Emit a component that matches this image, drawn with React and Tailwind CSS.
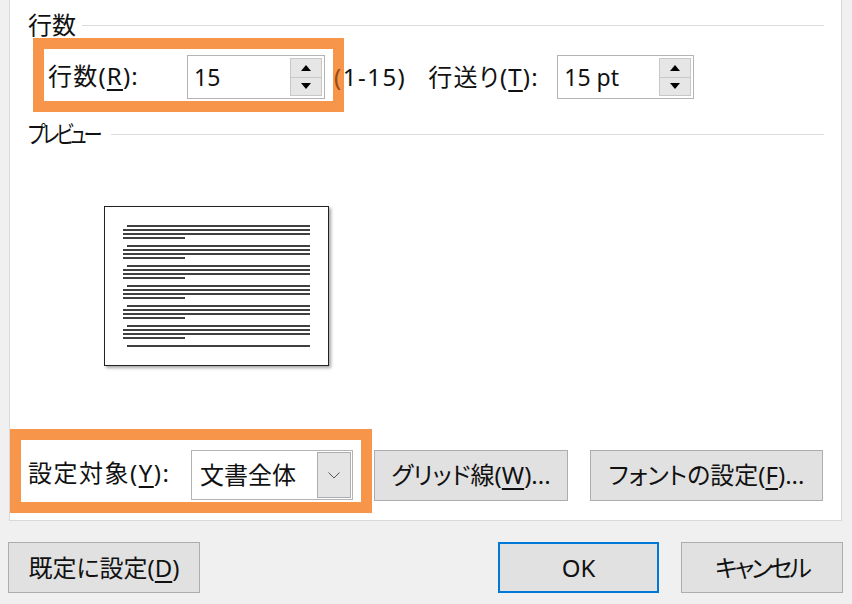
import { useState } from "react";

const font = { fontFamily: '"Noto Sans", "Noto Sans CJK JP", sans-serif' };

function Spin({ value, w }) {
  return (
    <div className={`flex items-center justify-between h-[44px] ${w} bg-white border border-[#b4b4b4] pl-[6px] pr-[2px]`}>
      <span className="text-[23px] leading-none">{value}</span>
      <div className="flex flex-col w-[32px] h-[38px] border border-[#c8c8c8]">
        <div className="flex-1 flex items-center justify-center bg-[#e6e6e6] border-b border-[#c8c8c8]">
          <svg width="10" height="6" viewBox="0 0 10 6"><path d="M0 6 L5 0 L10 6 Z" fill="#000" /></svg>
        </div>
        <div className="flex-1 flex items-center justify-center bg-[#e6e6e6]">
          <svg width="10" height="6" viewBox="0 0 10 6"><path d="M0 0 L5 6 L10 0 Z" fill="#000" /></svg>
        </div>
      </div>
    </div>
  );
}

function Heading({ text, gap, track }) {
  return (
    <div className="flex items-center h-[24px] pl-[18px] pr-[17px]">
      <span className={`inline-block text-[24px] leading-none origin-left ${track}`}>{text}</span>
      <div className={`flex-1 h-px bg-[#dcdcdc] ${gap}`} />
    </div>
  );
}

function Preview() {
  const ys = [];
  for (let g = 0; g < 6; g++) {
    for (let k = 0; k < 4; k++) ys.push({ y: 19 + g * 20 + k * 4, k });
  }
  return (
    <div className="ml-[94px] w-[225px] h-[160px] bg-white border border-[#222] shadow-[2px_2px_3px_rgba(0,0,0,0.35)]">
      <svg width="223" height="158" viewBox="0 0 223 158">
        {ys.map((l, i) => (
          <line
            key={i}
            x1={l.k === 0 ? 22 : 18}
            x2={l.k === 3 ? 80 : 205}
            y1={l.y}
            y2={l.y}
            stroke="#000"
            strokeWidth="1.3"
          />
        ))}
        <line x1="22" x2="205" y1="139" y2="139" stroke="#000" strokeWidth="1.3" />
      </svg>
    </div>
  );
}

function Btn({ children, w, ok, track }) {
  return (
    <button
      className={`${w} h-[51px] flex items-center justify-center bg-[#e1e1e1] text-[24px] leading-none ${track || ""} ${
        ok ? "border-2 border-[#0078d7]" : "border border-[#adadad]"
      }`}
    >
      {children}
    </button>
  );
}

export default function App() {
  const [target] = useState("文書全体");

  return (
    <div
      style={font}
      className="w-[852px] h-[604px] bg-[#f0f0f0] text-[#111] overflow-hidden [font-feature-settings:'palt']"
    >
      {/* Panel */}
      <div className="ml-[9px] w-[833px] h-[521px] bg-white border-l border-r border-b border-[#d9d9d9] pt-[13px]">
        <Heading text="行数" gap="ml-[6px]" track="" />

        {/* 行数 row */}
        <div className="flex items-center mt-[1px]">
          <div className="relative z-10 ml-[23px] border-[11px] border-[#f7964a] bg-white flex items-center h-[74px] pl-[4px] pr-[8px]">
            <span className="w-[139px] text-[24px] leading-none mt-[2px] tracking-[1.2px]">
              行数(<span className="underline underline-offset-4">R</span>):
            </span>
            <div className="mt-[4px]">
              <Spin value="15" w="w-[138px]" />
            </div>
          </div>
          <span className="relative z-20 -ml-[10px] text-[24px] leading-none mt-[4px] tracking-[1.5px]">
            <span className="text-[#9a4a14]">(</span>1-15)
          </span>
          <span className="ml-[22px] w-[129px] text-[24px] leading-none mt-[4px] tracking-[1.2px]">
            行送り(<span className="underline underline-offset-4">T</span>):
          </span>
          <div className="mt-[4px]">
            <Spin value="15 pt" w="w-[137px]" />
          </div>
        </div>

        <div className="mt-[10px]">
          <Heading text="プレビュー" gap="ml-[-6px]" track="tracking-[-4px] scale-x-[0.8]" />
        </div>

        <div className="mt-[60px]">
          <Preview />
        </div>

        {/* 設定対象 row */}
        <div className="flex items-center mt-[63px]">
          <div className="border-[11px] border-[#f7964a] bg-white flex items-center h-[84px] pl-[7px] pr-[8px]">
            <span className="w-[163px] text-[24px] leading-none mt-[4px] tracking-[1.5px]">
              設定対象(<span className="underline underline-offset-4">Y</span>):
            </span>
            <div className="mt-[8px] w-[162px] h-[50px] flex items-center justify-between border border-[#b4b4b4] bg-white pl-[8px] pr-[1px]">
              <span className="text-[24px] leading-none">{target}</span>
              <div className="w-[34px] h-[46px] flex items-center justify-center bg-[#e5e5e5] border border-[#adadad]">
                <svg width="12" height="7" viewBox="0 0 12 7">
                  <path d="M0.5 0.5 L6 6 L11.5 0.5" fill="none" stroke="#555" strokeWidth="1" />
                </svg>
              </div>
            </div>
          </div>
          <div className="ml-[2px] flex gap-[22px] mt-[8px]">
            <Btn w="w-[194px]">
              グリッド線(<span className="underline underline-offset-4">W</span>)...
            </Btn>
            <Btn w="w-[233px]">
              フォントの設定(<span className="underline underline-offset-4">F</span>)...
            </Btn>
          </div>
        </div>
      </div>

      {/* Dialog buttons */}
      <div className="flex mt-[21px] pl-[8px]">
        <Btn w="w-[192px]">
          既定に設定(<span className="underline underline-offset-4">D</span>)
        </Btn>
        <div className="ml-auto flex gap-[22px] mr-[9px]">
          <Btn w="w-[161px]" ok>
            OK
          </Btn>
          <Btn w="w-[162px]" track="tracking-[-3px]">
            キャンセル
          </Btn>
        </div>
      </div>
    </div>
  );
}
